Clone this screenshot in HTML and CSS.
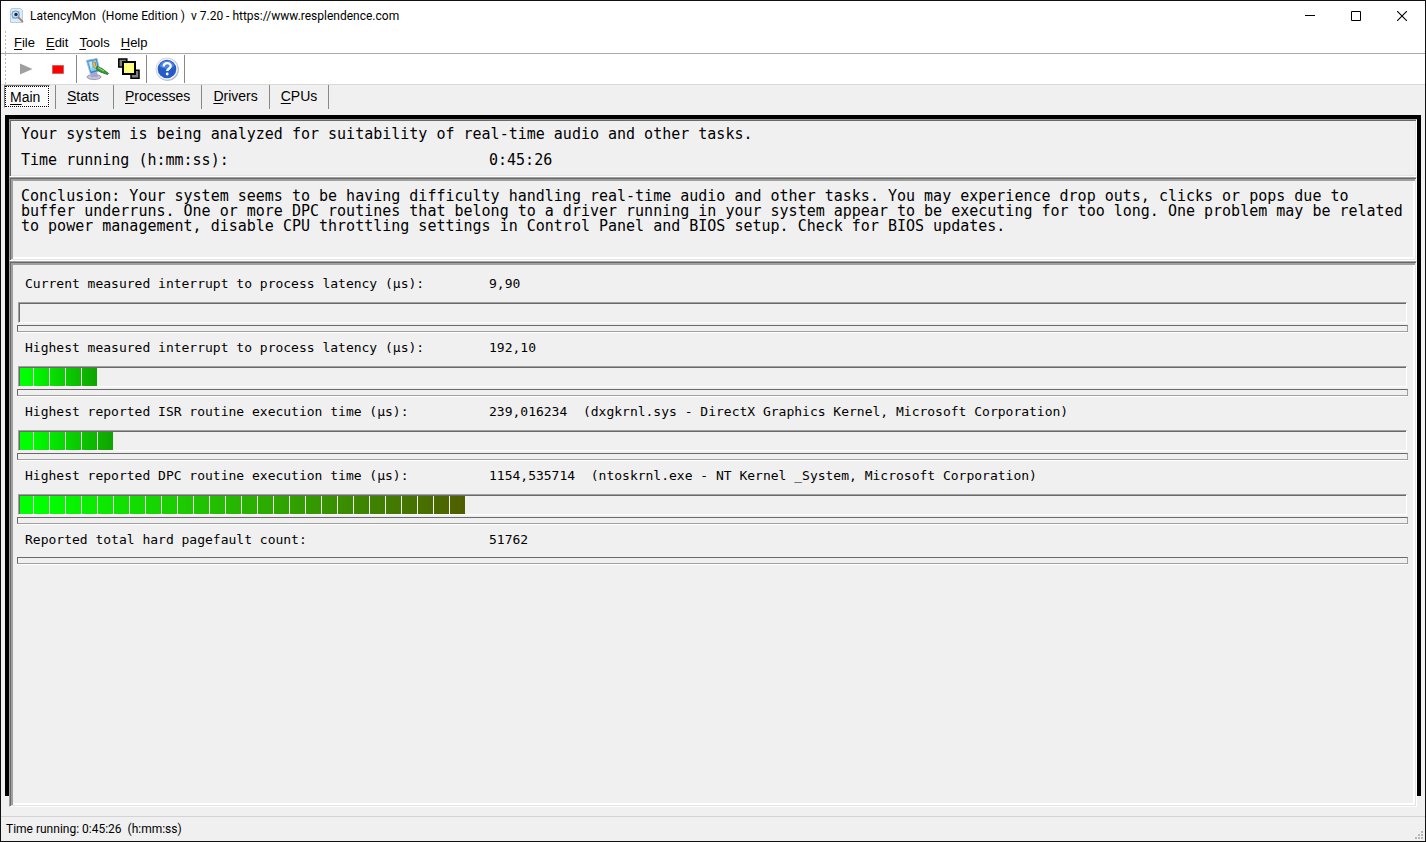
FILE: index.html
```html
<!DOCTYPE html>
<html lang="en">
<head>
<meta charset="utf-8">
<title>LatencyMon</title>
<link rel="stylesheet" href="styles.css">
</head>
<body>
<div class="window">
  <header class="titlebar">
    <svg class="app-icon" width="16" height="16" viewBox="0 0 16 16" aria-hidden="true">
      <path d="M2.500.500h9l2 2v12h-12v-12z" fill="#dcecf8" stroke="#b4cde0"/>
      <path d="M3 3h8v8H3z" fill="#a9cdea"/>
      <circle cx="6.500" cy="6.500" r="3.600" fill="#c4e2f6" stroke="#7196b5"/>
      <circle cx="7" cy="6.500" r="1.700" fill="#182b45"/>
      <path d="M9.500 9.500l4 4" stroke="#a8847a" stroke-width="1.800" stroke-linecap="round"/>
    </svg>
    <h1 class="title">LatencyMon  (Home Edition )  v 7.20 - https://www.resplendence.com</h1>
    <div class="window-buttons">
      <button class="window-button" aria-label="Minimize"><svg width="10" height="10" viewBox="0 0 10 10"><path d="M0 4.500h10" stroke="#000"/></svg></button>
      <button class="window-button" aria-label="Maximize"><svg width="10" height="10" viewBox="0 0 10 10"><path d="M.5.5h9v9h-9z" fill="none" stroke="#000"/></svg></button>
      <button class="window-button" aria-label="Close"><svg width="10" height="10" viewBox="0 0 10 10"><path d="M0 0l10 10M10 0L0 10" stroke="#000" stroke-width="1.100"/></svg></button>
    </div>
  </header>

  <nav class="menubar" aria-label="Menu">
    <button class="menu-item"><u>F</u>ile</button>
    <button class="menu-item"><u>E</u>dit</button>
    <button class="menu-item"><u>T</u>ools</button>
    <button class="menu-item"><u>H</u>elp</button>
  </nav>

  <div class="toolbar" role="toolbar" aria-label="Tools">
    <div class="tool-group">
      <button class="tool" aria-label="Start"><svg width="24" height="24" viewBox="0 0 24 24"><path d="M6 6.500v11L18.500 12z" fill="#a0a0a0"/></svg></button>
      <button class="tool" aria-label="Stop"><svg width="24" height="24" viewBox="0 0 24 24"><path d="M6.500 8.500h11v8h-11z" fill="#f00" stroke="#c66"/></svg></button>
    </div>
    <div class="tool-group">
      <button class="tool" aria-label="Options"><svg width="24" height="24" viewBox="0 0 24 24">
        <ellipse cx="9" cy="20" rx="7" ry="2.600" fill="#c5c0dc" stroke="#85809f" stroke-width=".7"/>
        <path d="M6 16l6-1 1 5H6z" fill="#aaa4c5"/>
        <path d="M1.500 3.500L12 1.500l3 12.500-9.500 3z" fill="#3d82ce" stroke="#9bb9da"/>
        <path d="M3 4.700l8-1.700 2 9.500-7 2z" fill="#7fd2f7"/>
        <path d="M4 5l6-1-4 8z" fill="#b8ecfc"/>
        <path d="M7.500 4.500l3 1v3l4 3-1.500 2-5-4z" fill="#e5bd58" stroke="#8a6a2a" stroke-width=".6"/>
        <path d="M12 9.500l5 2 6.500 5-1 1-7-2.500-4-3z" fill="#36a23a" stroke="#12651e" stroke-width=".8"/>
        <path d="M13 10.500l6 3.500" stroke="#a0e070"/>
      </svg></button>
      <button class="tool" aria-label="Windows"><svg width="24" height="24" viewBox="0 0 24 24">
        <path d="M1.800 2h8v8h-8zM14 13.200h8v8h-8z" fill="#808080" stroke="#000" stroke-width="1.500"/>
        <path d="M6 5h12v12H6z" fill="#ffff70" stroke="#000" stroke-width="2"/>
        <path d="M8 8h8M8 10.500h8M8 13h8" stroke="#ffffb8" stroke-dasharray="1 1"/>
      </svg></button>
    </div>
    <div class="tool-group">
      <button class="tool" aria-label="Help"><svg width="24" height="24" viewBox="0 0 24 24">
        <circle cx="12.500" cy="12.500" r="11.300" fill="#a5a9b8"/>
        <circle cx="12" cy="12" r="11" fill="#f3f6fb" stroke="#c0c8d8" stroke-width=".7"/>
        <circle cx="12" cy="12" r="9.300" fill="#255bc7"/>
        <path d="M4.500 9a8 8 0 0 1 15 0c-3 3-11 4-15 0z" fill="#4d83e2"/>
        <path d="M8.700 9.500c0-4.300 7-4.300 7-.5 0 2.700-3.500 2.700-3.500 5" fill="none" stroke="#fff" stroke-width="2.300"/>
        <circle cx="12.200" cy="17" r="1.400" fill="#fff"/>
      </svg></button>
    </div>
  </div>

  <div class="tabs" role="tablist">
    <button class="tab tab-active" role="tab" aria-selected="true"><u>M</u>ain</button>
    <button class="tab" role="tab" aria-selected="false"><u>S</u>tats</button>
    <button class="tab" role="tab" aria-selected="false"><u>P</u>rocesses</button>
    <button class="tab" role="tab" aria-selected="false"><u>D</u>rivers</button>
    <button class="tab" role="tab" aria-selected="false"><u>C</u>PUs</button>
  </div>

  <main class="frame">
    <section class="panel summary">
      <p class="line">Your system is being analyzed for suitability of real-time audio and other tasks.</p>
      <p class="line pair"><span>Time running (h:mm:ss):</span><span>0:45:26</span></p>
    </section>
    <section class="panel panel-deep conclusion">
      <p>Conclusion: Your system seems to be having difficulty handling real-time audio and other tasks. You may experience drop outs, clicks or pops due to buffer underruns. One or more DPC routines that belong to a driver running in your system appear to be executing for too long. One problem may be related to power management, disable CPU throttling settings in Control Panel and BIOS setup. Check for BIOS updates.</p>
    </section>
    <section class="panel panel-deep readings">
      <div class="reading">
        <p class="pair"><span>Current measured interrupt to process latency (µs):</span><span>9,90</span></p>
        <div class="bar" role="progressbar" aria-label="Current latency"></div>
        <div class="rule"></div>
      </div>
      <div class="reading">
        <p class="pair"><span>Highest measured interrupt to process latency (µs):</span><span>192,10</span></p>
        <div class="bar" role="progressbar" aria-label="Highest latency"><div class="fill" style="width:77px"></div></div>
        <div class="rule"></div>
      </div>
      <div class="reading">
        <p class="pair"><span>Highest reported ISR routine execution time (µs):</span><span>239,016234  (dxgkrnl.sys - DirectX Graphics Kernel, Microsoft Corporation)</span></p>
        <div class="bar" role="progressbar" aria-label="ISR execution time"><div class="fill" style="width:93px"></div></div>
        <div class="rule"></div>
      </div>
      <div class="reading">
        <p class="pair"><span>Highest reported DPC routine execution time (µs):</span><span>1154,535714  (ntoskrnl.exe - NT Kernel _System, Microsoft Corporation)</span></p>
        <div class="bar" role="progressbar" aria-label="DPC execution time"><div class="fill fill-high" style="width:445px"></div></div>
        <div class="rule"></div>
      </div>
      <div class="reading">
        <p class="pair"><span>Reported total hard pagefault count:</span><span>51762</span></p>
        <div class="rule"></div>
      </div>
    </section>
  </main>

  <footer class="statusbar">
    <span>Time running: 0:45:26  (h:mm:ss)</span>
    <svg class="grip" width="8" height="8" viewBox="0 0 8 8" aria-hidden="true"><path d="M6 0h2v2H6zM3 3h2v2H3zM6 3h2v2H6zM0 6h2v2H0zM3 6h2v2H3zM6 6h2v2H6z" fill="#b8b8b8"/></svg>
  </footer>
</div>
</body>
</html>
```
FILE: styles.css
```css
* { box-sizing: border-box; }

body { margin: 0; color: #000; }

p, h1 { margin: 0; }

svg { display: block; }

button {
  margin: 0;
  padding: 0;
  border: 0;
  background: none;
  color: inherit;
  font: inherit;
}

u { text-underline-offset: 2px; }

.window {
  display: flex;
  flex-direction: column;
  min-height: 100vh;
  border: 1px solid #111;
  background: #f0f0f0;
}

/* Title bar */
.titlebar {
  display: flex;
  align-items: center;
  height: 30px;
  padding-left: 8px;
  background: #fff;
}

.title {
  flex: 1;
  margin-left: 5px;
  font: 12px Roboto, "Open Sans", sans-serif;
  white-space: pre;
}

.window-buttons { display: flex; }

.window-button {
  display: grid;
  place-items: center;
  width: 46px;
  height: 28px;
}

/* Menu and toolbar */
.menubar {
  display: flex;
  align-items: center;
  gap: 11px;
  height: 23px;
  margin: 0;
  padding-left: 8px;
  border-bottom: 1px solid #aaa;
  background: #fff;
  font: 13px "Liberation Sans", Arial, sans-serif;
}

.menubar::before,
.toolbar::before {
  content: "";
  align-self: stretch;
  width: 1px;
  margin-left: -4px;
  background: repeating-linear-gradient(#bbb 0 2px, #fff 2px 4px);
}

.menubar::before { margin-right: -3px; }

.toolbar {
  display: flex;
  align-items: center;
  height: 31px;
  padding-left: 8px;
  border-bottom: 1px solid #d9d9d9;
  background: #fff;
}

.tool-group {
  display: flex;
  gap: 8px;
  padding: 2px 6px 2px 8px;
  border-right: 1px solid #888;
}

.tool-group:nth-child(n + 2) { padding: 2px 5px 2px 8px; }

/* Tabs */
.tabs {
  display: flex;
  height: 24px;
  margin: 0 0 6px 3px;
  font: 14px "Liberation Sans", Arial, sans-serif;
}

.tab {
  min-width: 58px;
  padding: 0 11px 2px;
  border-right: 1px solid #888;
  text-align: left;
}

.tab-active {
  min-width: 46px;
  height: 23px;
  margin-right: 5px;
  padding: 0 5px;
  border: 1px solid #777;
  border-right-color: #fff;
  border-bottom-color: #fff;
  outline: 1px dotted #000;
  outline-offset: -2px;
  background: #fafafa;
}

.tab-active + .tab {
  min-width: 59px;
  border-left: 1px solid #888;
}

/* Content */
.frame {
  display: flex;
  flex: 1;
  flex-direction: column;
  margin: 0 4px 20px;
  border: 4px solid #000;
  border-bottom: 0;
  font: 15px/15px "DejaVu Sans Mono", monospace;
}

.panel {
  border: 1px solid #fff;
  border-top-color: #a0a0a0;
  border-left-color: #a0a0a0;
  box-shadow: inset 1px 1px #696969, inset -1px -1px #e3e3e3;
}

.panel-deep {
  box-shadow: inset 1px 1px #696969, inset -1px -1px #e3e3e3,
    inset 3px 3px #a0a0a0, inset -3px -3px #fff;
}

.pair {
  display: grid;
  grid-template-columns: 464px 1fr;
  white-space: pre;
}

.summary { padding: 1px 11px 3px; }

.summary .line { line-height: 26px; }

.summary .pair { grid-template-columns: 468px 1fr; }

.conclusion {
  min-height: 84px;
  padding: 11px;
}

/* The last panel hangs below the end of the black frame. */
.readings {
  flex: 1;
  margin-bottom: -11px;
  padding: 8px 8px 8px 7px;
}

.reading {
  margin-bottom: 2px;
  font-size: 13px;
}

.reading .pair {
  padding: 0 0 4px 8px;
  line-height: 28px;
}

.reading:last-child .pair { padding-bottom: 3px; }

.bar {
  height: 21px;
  margin: 0 1px 2px;
  border: 1px solid #fff;
  border-top-color: #a0a0a0;
  border-left-color: #a0a0a0;
  box-shadow: inset 1px 1px #696969;
  padding: 1px 0 0 1px;
}

.fill {
  height: 18px;
  background:
    repeating-linear-gradient(90deg, transparent 0 15px, #f0f0f0 15px 16px) -2px 0 / 1600px 100%,
    linear-gradient(90deg, #0f0 10%, #10a400);
}

.fill-high {
  background:
    repeating-linear-gradient(90deg, transparent 0 15px, #f0f0f0 15px 16px) -2px 0 / 1600px 100%,
    linear-gradient(90deg, #0f0 5%, #28b400 50%, #505e00);
}

.rule {
  height: 7px;
  border: 1px solid #696969;
  border-right-color: #a0a0a0;
  border-bottom-color: #a0a0a0;
  box-shadow: 0 1px #fff;
}

/* Status bar */
.statusbar {
  display: flex;
  align-items: center;
  justify-content: space-between;
  height: 25px;
  padding: 0 2px 0 5px;
  border-top: 1px solid #d4d4d4;
  font: 12px Roboto, "Open Sans", sans-serif;
  white-space: pre;
}

.grip {
  align-self: flex-end;
  margin-bottom: 2px;
}
```
